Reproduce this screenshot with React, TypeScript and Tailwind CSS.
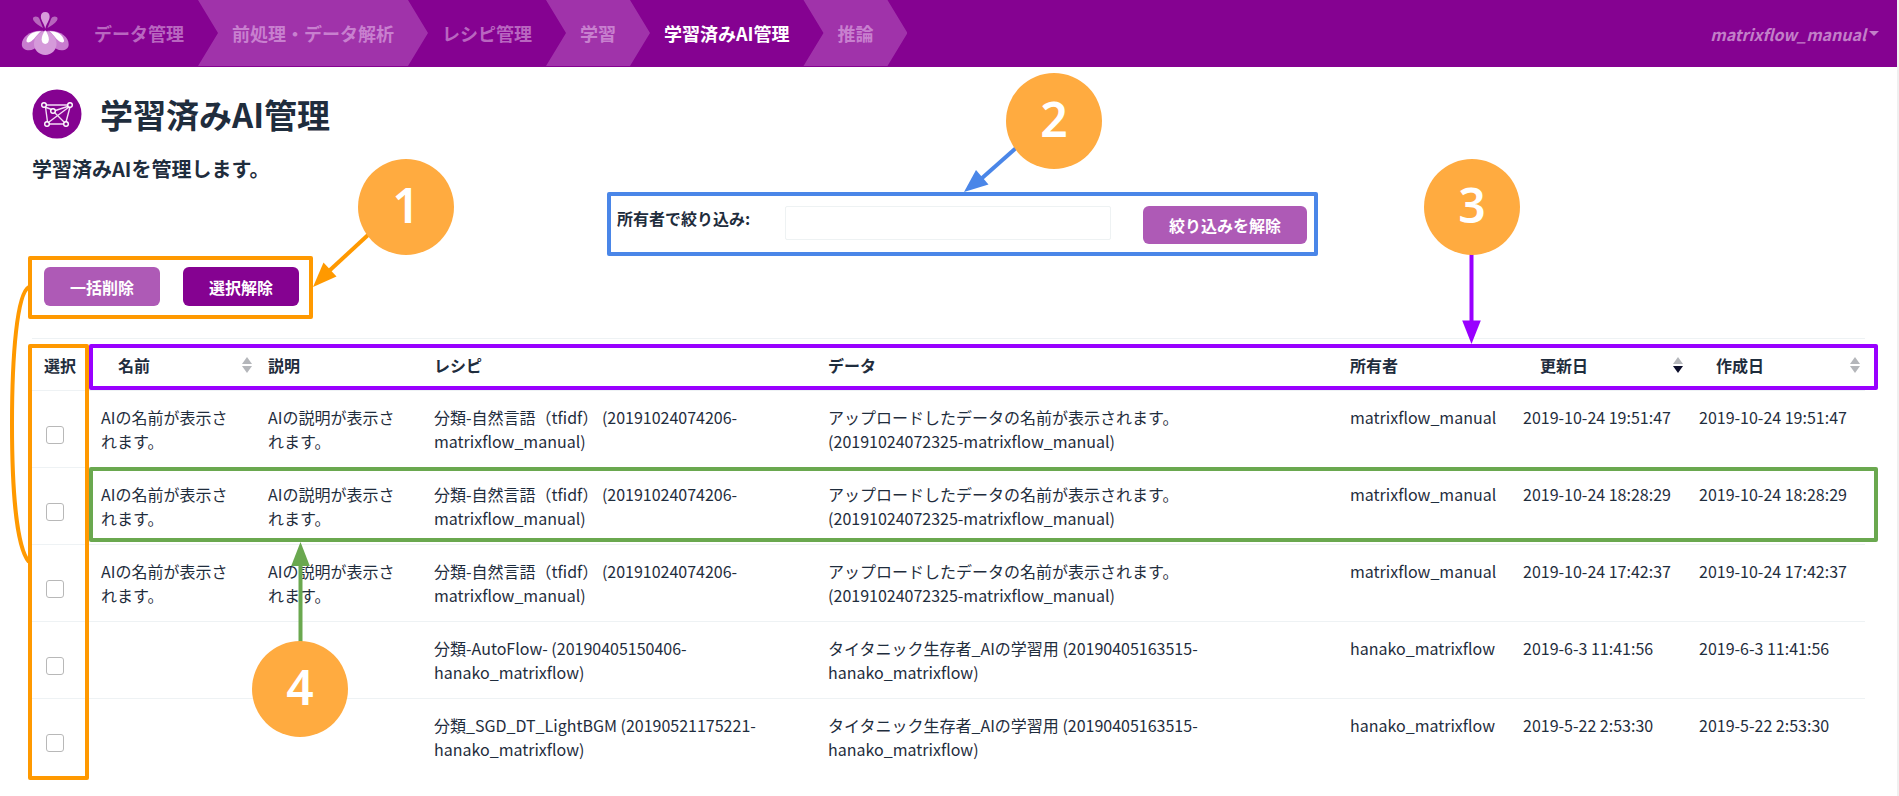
import React from "react";

const stages = [
  { label: "データ管理", raised: false, active: false },
  { label: "前処理・データ解析", raised: true, active: false },
  { label: "レシピ管理", raised: false, active: false },
  { label: "学習", raised: true, active: false },
  { label: "学習済みAI管理", raised: false, active: true },
  { label: "推論", raised: true, active: false },
];

const tfidf = "分類-自然言語（tfidf） (20191024074206-\nmatrixflow_manual)";
const upload = "アップロードしたデータの名前が表示されます。\n(20191024072325-matrixflow_manual)";
const titanic = "タイタニック生存者_AIの学習用 (20190405163515-\nhanako_matrixflow)";

const rows = [
  { name: "AIの名前が表示されます。", desc: "AIの説明が表示されます。", recipe: tfidf, data: upload, owner: "matrixflow_manual", updated: "2019-10-24 19:51:47", created: "2019-10-24 19:51:47" },
  { name: "AIの名前が表示されます。", desc: "AIの説明が表示されます。", recipe: tfidf, data: upload, owner: "matrixflow_manual", updated: "2019-10-24 18:28:29", created: "2019-10-24 18:28:29" },
  { name: "AIの名前が表示されます。", desc: "AIの説明が表示されます。", recipe: tfidf, data: upload, owner: "matrixflow_manual", updated: "2019-10-24 17:42:37", created: "2019-10-24 17:42:37" },
  { name: "", desc: "", recipe: "分類-AutoFlow- (20190405150406-\nhanako_matrixflow)", data: titanic, owner: "hanako_matrixflow", updated: "2019-6-3 11:41:56", created: "2019-6-3 11:41:56" },
  { name: "", desc: "", recipe: "分類_SGD_DT_LightBGM (20190521175221-\nhanako_matrixflow)", data: titanic, owner: "hanako_matrixflow", updated: "2019-5-22 2:53:30", created: "2019-5-22 2:53:30" },
];

function Logo() {
  return (
    <svg viewBox="0 0 48 44" className="h-11 w-12" aria-hidden="true">
      <g fill="#b766bd">
        <path d="M12.500 5.200c2.200-1.400 4.800-.6 5.900 1.600L22 16c-4-2.200-7.500-4.600-9.300-7.300-.9-1.400-1-2.800-.2-3.500z" />
        <path d="M36 5.200c-2.200-1.400-4.800-.6-5.900 1.600L26.500 16c4-2.200 7.500-4.600 9.300-7.300.9-1.400 1-2.800.2-3.500z" />
      </g>
      <path d="M24.250 0c2.900 0 4.400 2.100 4.400 4.600 0 3.900-2.900 6.400-4.400 12.100-1.500-5.700-4.400-8.200-4.400-12.100 0-2.500 1.500-4.600 4.400-4.600z" fill="#d79bdb" />
      <path d="M22 18.800C10 17.500.8 24.500.8 32.300c0 4 3.200 6 7.200 6C14.500 38.300 22 31 22 18.800z" fill="#c87ccf" />
      <path d="M26.500 18.800c12-1.300 21.200 5.700 21.200 13.500 0 4-3.200 6-7.200 6-6.500 0-14-7.300-14-19.500z" fill="#c87ccf" />
      <path d="M20 19.200C12 19 6.500 23 5.500 28.200c-.3 2 1.400 2.700 3.400 1.800C13 28 15 23.500 20 19.200z" fill="#fff" />
      <path d="M28.500 19.200c8-.2 13.500 3.800 14.500 9 .3 2-1.400 2.700-3.400 1.800-4.100-2-6.100-6.500-11.100-10.800z" fill="#fff" />
      <path d="M24.250 18.500c6.800 2 11.300 7.500 11.300 13.300 0 6.300-5 11.200-11.300 11.200s-11.300-4.900-11.300-11.200c0-5.800 4.500-11.300 11.300-13.300z" fill="#d59ada" />
      <path d="M24.250 18.500c2.300 2.700 3.600 6 3.600 9 0 2.700-1.500 4.400-3.600 4.400s-3.600-1.700-3.600-4.400c0-3 1.300-6.300 3.600-9z" fill="#fff" />
    </svg>
  );
}

function NetworkBadge() {
  return (
    <svg viewBox="0 0 50 50" className="size-[50px] shrink-0" aria-hidden="true">
      <circle cx="25" cy="25" r="24.500" fill="#850291" />
      <g fill="none" stroke="#f3dcf5" strokeWidth="1.400">
        <path d="M14 16h22M13 18l8 3M13.500 18l2 15M37 17L22 22M37 18L17 33M38 18l-4 15M17 35h15M22 23l11 11" />
      </g>
      <g fill="#850291" stroke="#fff" strokeWidth="1.400">
        <circle cx="12" cy="16" r="2.300" />
        <circle cx="38" cy="16" r="2.300" />
        <circle cx="21" cy="22" r="2.300" />
        <circle cx="15" cy="35" r="2.300" />
        <circle cx="34" cy="35" r="2.300" />
      </g>
    </svg>
  );
}

function SortIcon({ descending = false }: { descending?: boolean }) {
  return (
    <svg viewBox="0 0 10 16" className="h-4 w-[10px] shrink-0" aria-hidden="true">
      <path d="M5 0l5 7H0z" fill="#b4b6ba" />
      <path d="M5 16l5-7H0z" fill={descending ? "#0b0d2a" : "#b4b6ba"} />
    </svg>
  );
}

function SortHeading({ label, descending }: { label: string; descending?: boolean }) {
  return (
    <th className="py-0 pr-[5px] pl-7 font-bold">
      <button type="button" className="flex w-full items-center justify-between">
        {label}
        <SortIcon descending={descending} />
      </button>
    </th>
  );
}

function Marker({ n, place }: { n: number; place: string }) {
  return (
    <div className={`absolute flex size-24 items-center justify-center rounded-full bg-[#ffab40] pb-1 font-['Noto_Sans',sans-serif] text-5xl font-semibold text-white ${place}`}>
      {n}
    </div>
  );
}

/* Numbered call-outs laid over the page, each with a frame and an arrow. */
function Callouts() {
  return (
    <div className="pointer-events-none absolute inset-0">
      <div className="absolute top-[256px] left-[28px] h-[63px] w-[285px] rounded-xs border-4 border-[#ff9900]" />
      <div className="absolute top-[344px] left-[28px] h-[436px] w-[61px] rounded-xs border-4 border-[#ff9900]" />
      <div className="absolute top-[192px] left-[607px] h-[64px] w-[711px] rounded-xs border-4 border-[#4a86e8]" />
      <div className="absolute top-[344px] right-[19px] left-[89px] h-[46px] rounded-xs border-4 border-[#9900ff]" />
      <div className="absolute top-[467px] right-[19px] left-[89px] h-[75px] rounded-xs border-4 border-[#6aa84f]" />
      <svg className="absolute top-0 left-0 h-[796px] w-[1600px]" viewBox="0 0 1600 796" fill="none" strokeWidth="4" aria-hidden="true">
        <path d="M29 287C17 293 12 355 12 424S17 548 29 562" stroke="#ff9900" />
        <path d="M368 235L329 271" stroke="#ff9900" />
        <path d="M313 287l10.500-24.500 13 14z" fill="#ff9900" />
        <path d="M1016 148L981 179" stroke="#4a86e8" />
        <path d="M964 192l12-22 12.500 14.500z" fill="#4a86e8" />
        <path d="M1471.500 254V322" stroke="#9900ff" />
        <path d="M1471.500 344l-9.300-23.500h18.600z" fill="#9900ff" />
        <path d="M300.500 642V564" stroke="#6aa84f" />
        <path d="M300.500 542l-9.300 24h18.600z" fill="#6aa84f" />
      </svg>
      <Marker n={1} place="top-[159px] left-[358px]" />
      <Marker n={2} place="top-[73px] left-[1006px]" />
      <Marker n={3} place="top-[159px] left-[1424px]" />
      <Marker n={4} place="top-[641px] left-[252px]" />
    </div>
  );
}

export default function App() {
  return (
    <div className="relative min-h-screen border-r-2 border-[#f0f0f0] bg-white font-['Noto_Sans_CJK_JP',sans-serif] text-base text-[#1f2d3d]">
      <header className="flex h-[67px] items-stretch bg-[#850291] pr-[18px]">
        <a href="#top" aria-label="MatrixFlow" className="mr-[11px] flex items-center pl-[21px]">
          <Logo />
        </a>
        <nav className="flex h-[66px] items-stretch text-lg font-bold">
          {stages.map((s) => (
            <a
              key={s.label}
              href="#stage"
              className={`flex items-center whitespace-nowrap ${
                s.raised
                  ? "bg-[#a033aa] px-[34px] [clip-path:polygon(0_0,calc(100%-20px)_0,100%_50%,calc(100%-20px)_100%,0_100%,20px_50%)]"
                  : "px-[14px]"
              } ${s.active ? "text-white" : s.raised ? "text-[#c880cf]" : "text-[#b966c0]"}`}
            >
              {s.label}
            </a>
          ))}
        </nav>
        <button type="button" className="ml-auto flex items-center gap-[3px] font-bold text-[#c27fc8] italic">
          matrixflow_manual
          <svg viewBox="0 0 10 5" className="h-[5px] w-[10px]" aria-hidden="true">
            <path d="M0 0h10L5 5z" fill="currentColor" />
          </svg>
        </button>
      </header>

      <main className="px-8 pt-[22px]">
        <div className="flex items-center gap-[18px]">
          <NetworkBadge />
          <h1 className="text-[33px] leading-[50px] font-bold">学習済みAI管理</h1>
        </div>
        <p className="mt-[14px] text-xl leading-8 font-bold">学習済みAIを管理します。</p>

        <form className="mt-[21px] ml-[585px] flex h-[38px] items-start">
          <label htmlFor="owner" className="w-[168px] leading-6 font-bold">所有者で絞り込み:</label>
          <input id="owner" className="h-[34px] w-[326px] rounded-xs border border-[#eef2f3] px-3" />
          <button type="button" className="ml-8 h-[38px] w-[164px] rounded-md bg-[#ae5ab6] font-bold text-white">絞り込みを解除</button>
        </form>

        <div className="mt-[23px] flex gap-[23px] pl-3">
          <button type="button" className="h-[39px] w-[116px] rounded-md bg-[#ae5ab6] font-bold text-white">一括削除</button>
          <button type="button" className="h-[39px] w-[116px] rounded-md bg-[#850291] font-bold text-white">選択解除</button>
        </div>

        <table className="mt-8 w-full table-fixed border-collapse text-left">
          <colgroup>
            <col className="w-[58px]" />
            <col className="w-[167px]" />
            <col className="w-[166px]" />
            <col className="w-[21.500%]" />
            <col />
            <col className="w-[173px]" />
            <col className="w-[176px]" />
            <col className="w-[177px]" />
          </colgroup>
          <thead>
            <tr className="h-[52px] border-y border-[#eef2f4]">
              <th className="px-3 font-bold">選択</th>
              <SortHeading label="名前" />
              <th className="px-[11px] font-bold">説明</th>
              <th className="px-[11px] font-bold">レシピ</th>
              <th className="px-[11px] font-bold">データ</th>
              <th className="px-[11px] font-bold">所有者</th>
              <SortHeading label="更新日" descending />
              <SortHeading label="作成日" />
            </tr>
          </thead>
          <tbody>
            {rows.map((r, i) => (
              <tr key={i} className="h-[77px] border-b border-[#eef2f4] align-top leading-6 last:border-b-0">
                <td className="px-[14px] pt-[35px]">
                  <input
                    type="checkbox"
                    aria-label={`${i + 1}行目を選択`}
                    className="block size-[18px] appearance-none rounded-[3px] border border-[#b8b8b8] bg-white checked:bg-[#850291]"
                  />
                </td>
                <td className="py-[14px] pr-6 pl-[11px]">{r.name}</td>
                <td className="py-[14px] pr-6 pl-[11px]">{r.desc}</td>
                <td className="px-[11px] py-[14px] whitespace-pre-line">{r.recipe}</td>
                <td className="px-[11px] py-[14px] whitespace-pre-line">{r.data}</td>
                <td className="px-[11px] py-[14px] whitespace-nowrap">{r.owner}</td>
                <td className="px-[11px] py-[14px] whitespace-nowrap">{r.updated}</td>
                <td className="px-[11px] py-[14px] whitespace-nowrap">{r.created}</td>
              </tr>
            ))}
          </tbody>
        </table>
      </main>
      <Callouts />
    </div>
  );
}
